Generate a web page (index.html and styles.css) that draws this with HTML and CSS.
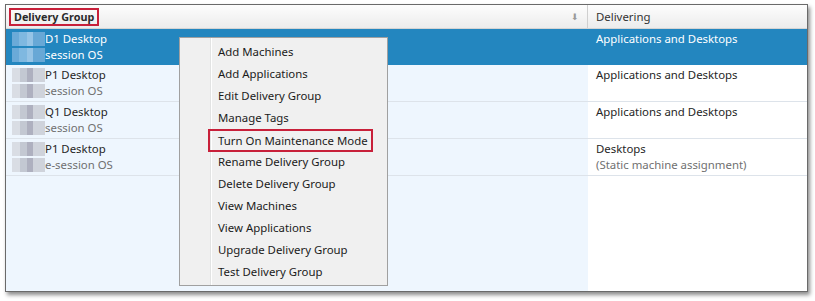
FILE: index.html
```html
<!DOCTYPE html>
<html>
<head>
<meta charset="utf-8">
<link rel="stylesheet" href="styles.css">
</head>
<body>
<div class="frame">
  <div class="header">
    <div class="hcell c1"><span class="hl-box">Delivery Group</span><span class="sort">&#x2B07;</span></div>
    <div class="hcell c2">Delivering</div>
  </div>
  <div class="row sel">
    <div class="cell c1"><div class="line"><span class="blur b1"></span>D1 Desktop</div><div class="line sub"><span class="blur b1"></span>session OS</div></div>
    <div class="cell c2"><div class="line">Applications and Desktops</div></div>
  </div>
  <div class="row">
    <div class="cell c1"><div class="line"><span class="blur b2"></span>P1 Desktop</div><div class="line sub"><span class="blur b2"></span>session OS</div></div>
    <div class="cell c2"><div class="line">Applications and Desktops</div></div>
  </div>
  <div class="row">
    <div class="cell c1"><div class="line"><span class="blur b2"></span>Q1 Desktop</div><div class="line sub"><span class="blur b2"></span>session OS</div></div>
    <div class="cell c2"><div class="line">Applications and Desktops</div></div>
  </div>
  <div class="row">
    <div class="cell c1"><div class="line"><span class="blur b2"></span>P1 Desktop</div><div class="line sub"><span class="blur b2 short"></span>e-session OS</div></div>
    <div class="cell c2"><div class="line">Desktops</div><div class="line sub">(Static machine assignment)</div></div>
  </div>
  <div class="row fill">
    <div class="cell c1"></div>
    <div class="cell c2"></div>
  </div>
  <div class="menu">
    <div class="item">Add Machines</div>
    <div class="item">Add Applications</div>
    <div class="item">Edit Delivery Group</div>
    <div class="item">Manage Tags</div>
    <div class="item"><span class="hl-box menu-hl">Turn On Maintenance Mode</span></div>
    <div class="item">Rename Delivery Group</div>
    <div class="item">Delete Delivery Group</div>
    <div class="item">View Machines</div>
    <div class="item">View Applications</div>
    <div class="item">Upgrade Delivery Group</div>
    <div class="item">Test Delivery Group</div>
  </div>
</div>
</body>
</html>
```
FILE: styles.css
```css
html, body { margin: 0; padding: 0; background: #ffffff; }
body {
  font-family: "Noto Sans", "Open Sans", sans-serif;
  font-size: 11.4px;
  color: #262626;
  padding: 4px 0 0 5px;
  width: 815px;
  height: 301px;
  box-sizing: border-box;
  white-space: nowrap;
}
.frame {
  position: relative;
  width: 803px;
  height: 288px;
  box-sizing: border-box;
  border: 1px solid #6a6a6a;
  background: #ffffff;
  box-shadow: 2px 3px 4px rgba(0,0,0,0.45);
  display: flex;
  flex-direction: column;
}
.header {
  display: flex;
  height: 23px;
  background: linear-gradient(#fdfdfd, #ececec);
  border-bottom: 1px solid #d4d4d4;
  flex: none;
}
.hcell {
  display: flex;
  align-items: center;
  box-sizing: border-box;
}
.c1 { width: 582px; flex: none; }
.c2 { flex: 1; }
.header .c1 {
  border-right: 1px solid #cfcfcf;
  padding-left: 3px;
  justify-content: space-between;
  padding-right: 8px;
}
.header .c2 { padding-left: 8px; color: #333; }
.hl-box {
  display: inline-block;
  border: 2px solid #c8203a;
  box-sizing: border-box;
}
.header .hl-box {
  font-weight: bold;
  font-size: 10.8px;
  color: #2a2a2a;
  padding: 0 3px 0 3px;
  height: 18px;
  line-height: 14px;
}
.sort { color: #9a9a9a; font-size: 9px; }
.row {
  display: flex;
  height: 37px;
  flex: none;
  box-sizing: border-box;
  border-bottom: 1px solid #dde3ea;
}
.row .c1 { background: #eef6fe; }
.row .c2 { background: #ffffff; padding-left: 8px; }
.row.fill { flex: 1; border-bottom: 0; }
.row.sel { height: 36px; border-bottom: 0; }
.row.sel .c1, .row.sel .c2 { background: #2386bf; color: #ffffff; }
.row.sel .sub { color: #ffffff; }
.cell {
  box-sizing: border-box;
  padding-top: 2px;
}
.line {
  height: 16px;
  line-height: 16px;
  display: flex;
  align-items: center;
}
.row .c1 .line { padding-left: 6px; }
.sub { color: #707070; }
.blur {
  display: inline-block;
  width: 33px;
  height: 14px;
}
.b1 {
  background: linear-gradient(90deg, #6aaad8 0 20%, #7fb8e0 20% 45%, #96c4e6 45% 65%, #68a8d6 65% 100%);
}
.b2 {
  background: linear-gradient(90deg, #d9dde4 0 25%, #c3c8d2 25% 45%, #aeb0bf 45% 65%, #cfd3db 65% 100%);
}
.menu {
  position: absolute;
  left: 173px;
  top: 32px;
  width: 209px;
  box-sizing: border-box;
  border: 1px solid #a0a0a0;
  background: linear-gradient(90deg, #f0f0f0 0 30px, #e2e3e3 30px 31px, #ffffff 31px 32px, #f0f0f0 32px);
  padding: 3px 0 2px;
  color: #1b1b1b;
}
.item {
  height: 22px;
  line-height: 22px;
  padding-left: 38px;
  display: flex;
  align-items: center;
}
.menu-hl {
  margin-left: -10px;
  padding: 0 3px 0 8px;
  height: 23px;
  line-height: 19px;
}
```
